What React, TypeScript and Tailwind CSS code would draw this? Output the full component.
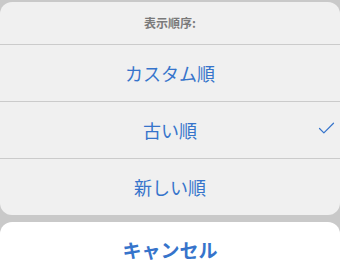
import { Check } from "lucide-react";

export default function App() {
  const options = [
    { label: "カスタム順", selected: false },
    { label: "古い順", selected: true },
    { label: "新しい順", selected: false },
  ];

  return (
    <div
      className="w-[340px] h-[275px] overflow-hidden bg-[#c9c9c9] pt-[2px]"
      style={{ fontFamily: '"Noto Sans CJK JP", "Noto Sans", sans-serif' }}
    >
      <div className="rounded-[12px] bg-[#f0f0f0]">
        <div className="h-[42px] flex items-center justify-center text-[12px] font-semibold text-[#7a7a7a]">
          表示順序:
        </div>
        <ul>
          {options.map((opt) => (
            <li
              key={opt.label}
              className="relative h-[57px] border-t border-[#cbcbcb] flex items-center justify-center text-[18px] text-[#3674cb]"
            >
              {opt.label}
              {opt.selected && (
                <Check className="absolute right-[3px] top-[16px] w-[21px] h-[21px] text-[#3674cb]" strokeWidth={1.4} />
              )}
            </li>
          ))}
        </ul>
      </div>
      <div className="mt-[7px] h-[60px] rounded-t-[12px] bg-white flex items-center justify-center pb-[4px] text-[19px] font-bold text-[#3674cb]">
        キャンセル
      </div>
    </div>
  );
}
